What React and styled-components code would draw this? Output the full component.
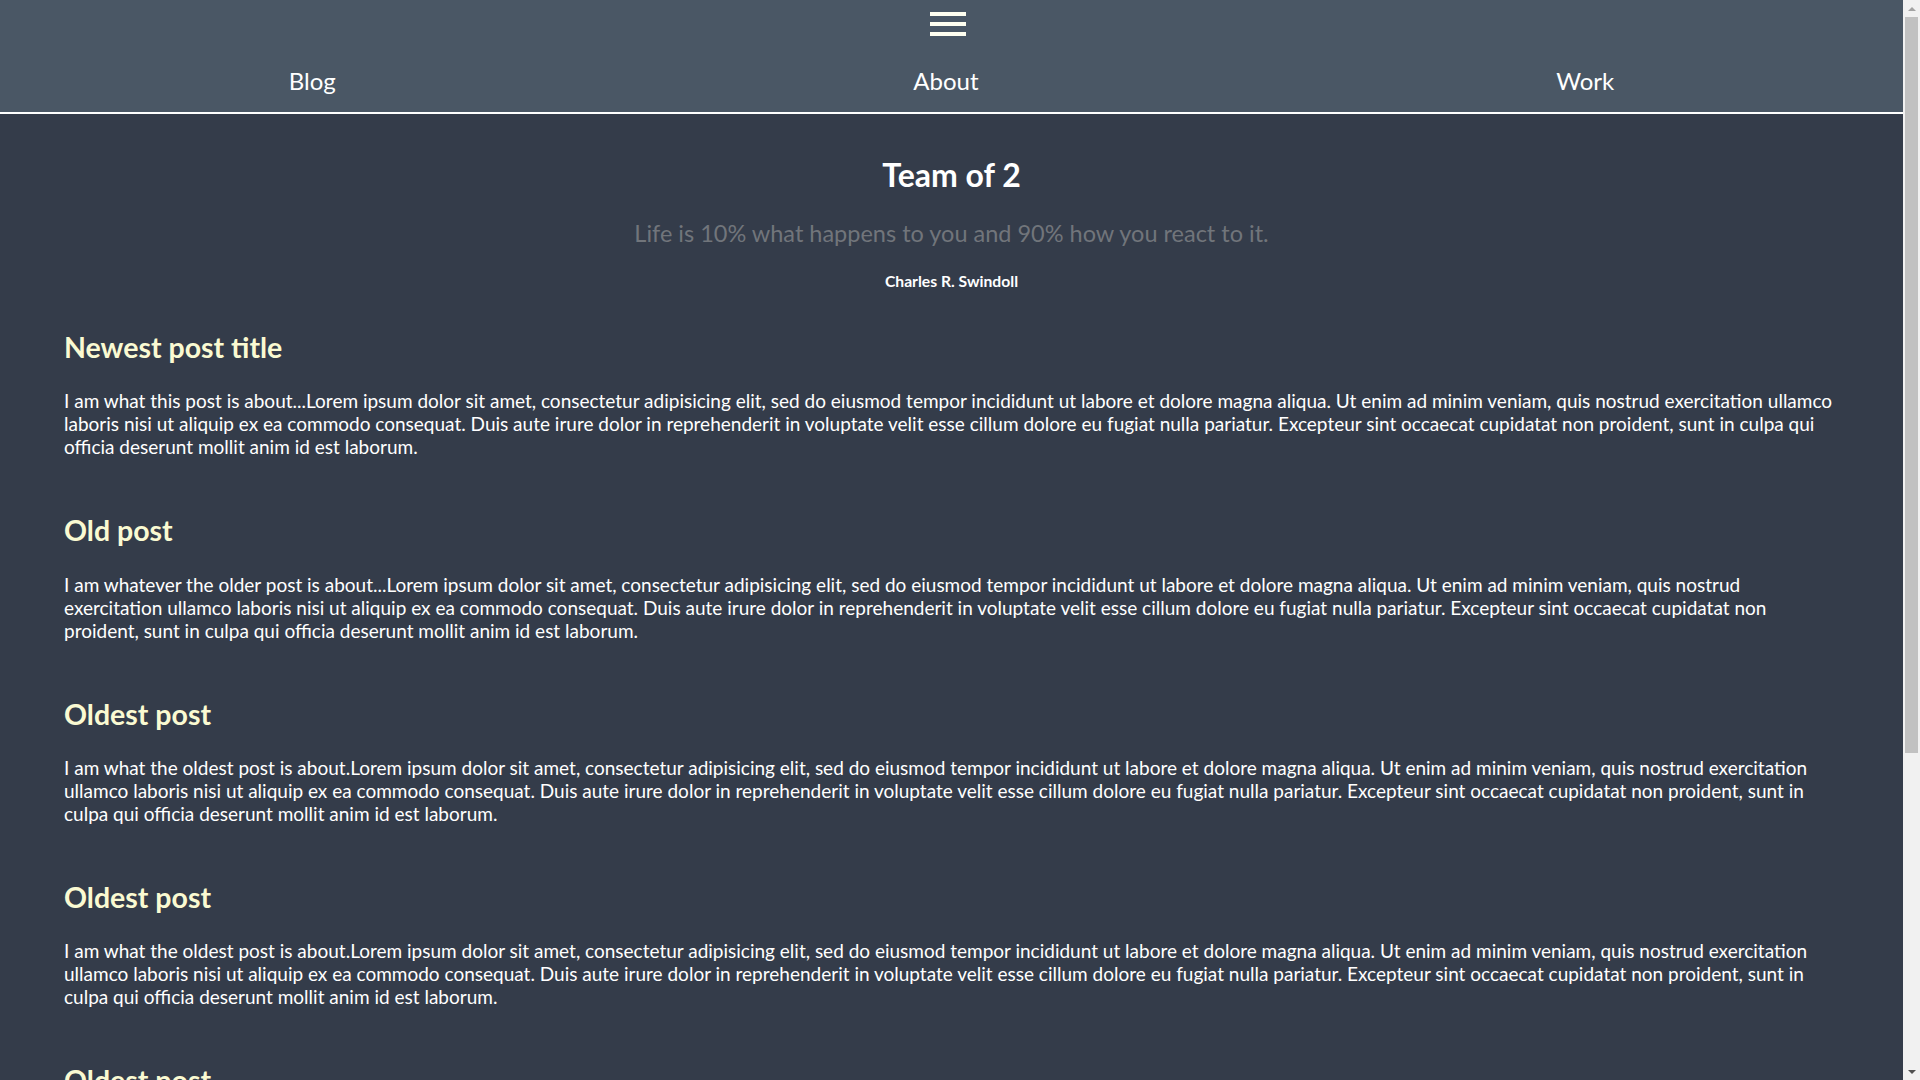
import styled, { createGlobalStyle } from "styled-components";

const GlobalStyle = createGlobalStyle`
  html, body {
    margin: 0;
    padding: 0;
    height: 100%;
    overflow: hidden;
  }
  body {
    background: #343c4a;
    font-family: Lato, "Open Sans", sans-serif;
    color: #ffffff;
  }
`;

const Shell = styled.div`
  display: flex;
  height: 100vh;
`;

const Content = styled.div`
  flex: 1;
  min-width: 0;
  overflow: hidden;
  background: #343c4a;
`;

// classic grey scrollbar seen at the right edge of the screenshot
const ScrollBar = styled.div`
  width: 17px;
  flex-shrink: 0;
  background: #f1f1f1;
  display: flex;
  flex-direction: column;
`;

const ScrollArrow = styled.div`
  height: 17px;
  display: flex;
  align-items: center;
  justify-content: center;
  &::before {
    content: "";
    border-left: 4px solid transparent;
    border-right: 4px solid transparent;
    ${(props) =>
      props.down
        ? "border-top: 4px solid #505050;"
        : "border-bottom: 4px solid #a3a3a3;"}
  }
`;

const ScrollTrack = styled.div`
  flex: 1;
  padding: 0 2px;
`;

const ScrollThumb = styled.div`
  height: 736px;
  background: #c1c1c1;
`;

const Header = styled.header`
  background: #4a5765;
  border-bottom: 2px solid #ffffff;
  padding: 12px 0 16px;
  display: flex;
  flex-direction: column;
  align-items: center;
`;

const MenuButton = styled.button`
  width: 36px;
  height: 24px;
  padding: 0;
  margin-right: 7px;
  border: none;
  background: transparent;
  display: flex;
  flex-direction: column;
  justify-content: space-between;
  cursor: pointer;
  span {
    display: block;
    height: 4px;
    background: #fffff0;
  }
`;

const Nav = styled.nav`
  width: 100%;
  margin-top: 31px;
  display: flex;
  justify-content: space-around;
`;

const NavLink = styled.a`
  font-size: 24px;
  line-height: 1.2;
  color: #ffffff;
  text-decoration: none;
`;

const Main = styled.main`
  padding: 0 64px 60px;
`;

const Hero = styled.section`
  text-align: center;
  padding-top: 42px;
`;

const Title = styled.h1`
  margin: 0;
  font-size: 32px;
  line-height: 1.2;
  font-weight: 700;
  color: #ffffff;
`;

const Quote = styled.p`
  margin: 25px 0 0;
  font-size: 23.5px;
  line-height: 1.2;
  color: #71757b;
`;

const Author = styled.p`
  margin: 25px 0 0;
  font-size: 15.7px;
  line-height: 1.2;
  font-weight: 700;
`;

const PostList = styled.div`
  margin-top: 39px;
  display: flex;
  flex-direction: column;
  gap: 55px;
`;

const Post = styled.article``;

const PostTitle = styled.h2`
  margin: 0 0 25px;
  font-size: 28.5px;
  line-height: 1.2;
  font-weight: 700;
  color: #fafad2;
`;

const PostBody = styled.p`
  margin: 0;
  font-size: 19px;
  line-height: 23px;
  color: #ffffff;
`;

const lorem =
  "Lorem ipsum dolor sit amet, consectetur adipisicing elit, sed do eiusmod tempor incididunt ut labore et dolore magna aliqua. Ut enim ad minim veniam, quis nostrud exercitation ullamco laboris nisi ut aliquip ex ea commodo consequat. Duis aute irure dolor in reprehenderit in voluptate velit esse cillum dolore eu fugiat nulla pariatur. Excepteur sint occaecat cupidatat non proident, sunt in culpa qui officia deserunt mollit anim id est laborum.";

const posts = [
  { title: "Newest post title", intro: "I am what this post is about..." },
  { title: "Old post", intro: "I am whatever the older post is about..." },
  { title: "Oldest post", intro: "I am what the oldest post is about." },
  { title: "Oldest post", intro: "I am what the oldest post is about." },
  { title: "Oldest post", intro: "I am what the oldest post is about." },
  { title: "Oldest post", intro: "I am what the oldest post is about." },
];

export default function App() {
  return (
    <Shell>
      <GlobalStyle />
      <Content>
        <Header>
          <MenuButton aria-label="menu">
            <span />
            <span />
            <span />
          </MenuButton>
          <Nav>
            <NavLink href="#">Blog</NavLink>
            <NavLink href="#">About</NavLink>
            <NavLink href="#">Work</NavLink>
          </Nav>
        </Header>
        <Main>
          <Hero>
            <Title>Team of 2</Title>
            <Quote>Life is 10% what happens to you and 90% how you react to it.</Quote>
            <Author>Charles R. Swindoll</Author>
          </Hero>
          <PostList>
            {posts.map((post, i) => (
              <Post key={`post-${i}`}>
                <PostTitle>{post.title}</PostTitle>
                <PostBody>
                  {post.intro}
                  {lorem}
                </PostBody>
              </Post>
            ))}
          </PostList>
        </Main>
      </Content>
      <ScrollBar>
        <ScrollArrow />
        <ScrollTrack>
          <ScrollThumb />
        </ScrollTrack>
        <ScrollArrow down />
      </ScrollBar>
    </Shell>
  );
}
